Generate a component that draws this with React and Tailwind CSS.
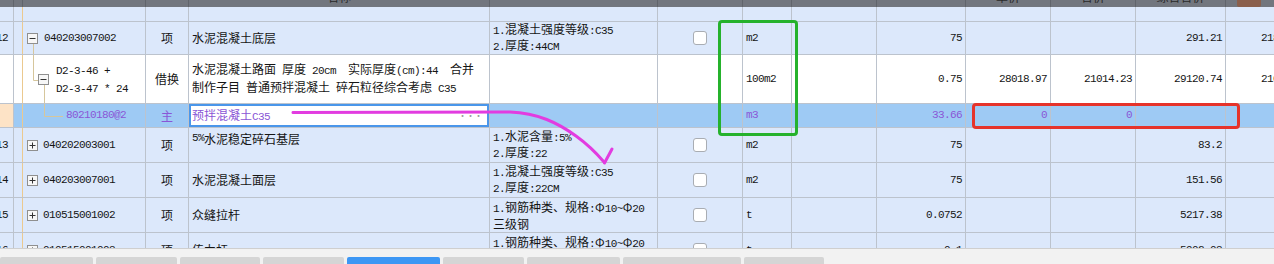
import React from "react"

const line = "border-[#bcc3cd]"

const W = [
  "w-[14px]", "w-[9px]", "w-[123px]", "w-[43px]", "w-[301px]", "w-[168px]", "w-[85px]",
  "w-[49px]", "w-[85px]", "w-[89px]", "w-[85px]", "w-[85px]", "w-[90px]", "w-[87px]",
]

// ascii runs get a mono font so digits are 6px wide like the original
function Txt({ s }) {
  return s
    .split(/([\x20-\x7e]+)/)
    .filter(Boolean)
    .map((p, i) =>
      /^[\x20-\x7e]+$/.test(p) ? (
        <span key={i} className="font-['Liberation_Mono',monospace] text-[11px] tracking-[-0.6px] whitespace-pre">
          {p}
        </span>
      ) : (
        <span key={i}>{p}</span>
      ),
    )
}

function C({ i, align = "items-center", className = "", children }) {
  return (
    <div
      className={`${W[i]} shrink-0 h-full border-r ${i === 1 ? "border-[#ebc98f]" : line} flex ${align} overflow-hidden whitespace-nowrap ${className}`}
    >
      {children}
    </div>
  )
}

function Row({ h, bg = "bg-[#dce8fb]", children }) {
  return <div className={`flex ${h} ${bg} border-b ${line}`}>{children}</div>
}

const Box = ({ plus }) => (
  <svg width="11" height="11" viewBox="0 0 11 11" className="shrink-0">
    <rect x="0.5" y="0.5" width="10" height="10" fill="#f7f7f7" stroke="#8f8f8f" />
    <path d={plus ? "M2.5 5.5h6M5.5 2.5v6" : "M2.5 5.5h6"} stroke="#333" strokeWidth="1" />
  </svg>
)

const Check = () => <div className="w-[14px] h-[14px] bg-white border border-[#a9adb3] rounded-[3px]" />

const items = [
  { no: "13", code: "040202003001", name: "5%水泥稳定碎石基层", top: true, feat: ["1.水泥含量:5%", "2.厚度:22"], unit: "m2", qty: "75", total: "83.2" },
  { no: "14", code: "040203007001", name: "水泥混凝土面层", feat: ["1.混凝土强度等级:C35", "2.厚度:22CM"], unit: "m2", qty: "75", total: "151.56" },
  { no: "15", code: "010515001002", name: "众缝拉杆", feat: ["1.钢筋种类、规格:Φ10~Φ20", "三级钢"], unit: "t", qty: "0.0752", total: "5217.38" },
  { no: "16", code: "010515001003", name: "传力杆", feat: ["1.钢筋种类、规格:Φ10~Φ20", "三级钢"], unit: "t", qty: "0.1", total: "5902.03" },
]

function ItemRow({ r }) {
  return (
    <Row h="h-[35px]">
      <C i={0} className="justify-end pr-[5px]"><Txt s={r.no} /></C>
      <C i={1} />
      <C i={2} className="pl-[4px] gap-[5px]"><Box plus /><Txt s={r.code} /></C>
      <C i={3} className="justify-center">项</C>
      <C i={4} align={r.top ? "items-start" : "items-center"} className={r.top ? "pl-[3px] pt-[2px]" : "pl-[3px]"}>
        <Txt s={r.name} />
      </C>
      <C i={5} className="pl-[3px]">
        <div className="leading-[13.5px]">
          {r.feat.map((f) => <div key={f}><Txt s={f} /></div>)}
        </div>
      </C>
      <C i={6} className="justify-center"><Check /></C>
      <C i={7} className="pl-[3px]"><Txt s={r.unit} /></C>
      <C i={8} />
      <C i={9} className="justify-end pr-[3px]"><Txt s={r.qty} /></C>
      <C i={10} />
      <C i={11} />
      <C i={12} className="justify-end pr-[3px]"><Txt s={r.total} /></C>
      <C i={13} />
    </Row>
  )
}

// only the lowest strokes of the header labels are still on screen
const heads = ["", "", "", "", "名称", "", "", "", "", "", "单价", "合价", "综合合价", ""]

const tabs = [
  ["工料机显示", "w-[93px]"],
  ["单价构成", "w-[81px]"],
  ["标准换算", "w-[80px]"],
  ["换算信息", "w-[81px]"],
  ["特征及内容", "w-[93px]"],
  ["组价方案", "w-[81px]"],
  ["工程量明细", "w-[93px]"],
  ["反查图形工程量", "w-[118px]"],
  ["说明信息", "w-[80px]"],
]

const purple = "text-[#8a56d6]"

export default function App() {
  return (
    <div className="relative w-[1274px] h-[264px] overflow-hidden bg-[#f2f2f2] font-['Noto_Sans_CJK_SC',sans-serif] text-[12px] text-[#151515]">
      <div className="h-[248px] overflow-hidden bg-[#dce8fb]">
        {/* header, mostly scrolled away */}
        <div className="flex h-[7px] bg-[#72767e]">
          {heads.map((h, i) => (
            <div key={i} className={`${W[i]} shrink-0 h-full border-r border-[#60646b] flex items-end justify-center overflow-hidden text-[#2a2a2a]`}>
              {i === 13 ? (
                <div className="w-[24px] h-[7px] ml-[-40px] bg-[#8a5f4c] rounded-b-[2px]" />
              ) : (
                <div className="leading-[12px] shrink-0 mb-[4px]">{h}</div>
              )}
            </div>
          ))}
        </div>

        {/* blank row */}
        <Row h="h-[15px]">
          {W.map((_, i) => <C key={i} i={i} />)}
        </Row>

        {/* row 12 */}
        <Row h="h-[33px]">
          <C i={0} className="justify-end pr-[5px]"><Txt s="12" /></C>
          <C i={1} />
          <C i={2} className="relative pl-[4px] gap-[6px]">
            <svg className="absolute left-0 top-0" width="123" height="33">
              <path d="M10.5 22V33" stroke="#d6c69c" />
            </svg>
            <Box />
            <Txt s="040203007002" />
          </C>
          <C i={3} className="justify-center">项</C>
          <C i={4} className="pl-[3px]">水泥混凝土底层</C>
          <C i={5} className="pl-[3px]">
            <div className="leading-[13px]">
              <div><Txt s="1.混凝土强度等级:C35" /></div>
              <div><Txt s="2.厚度:44CM" /></div>
            </div>
          </C>
          <C i={6} className="justify-center"><Check /></C>
          <C i={7} className="pl-[3px]"><Txt s="m2" /></C>
          <C i={8} />
          <C i={9} className="justify-end pr-[3px]"><Txt s="75" /></C>
          <C i={10} />
          <C i={11} />
          <C i={12} className="justify-end pr-[3px]"><Txt s="291.21" /></C>
          <C i={13} className="justify-end pr-[3px]"><Txt s="21840.75" /></C>
        </Row>

        {/* D2 row */}
        <Row h="h-[49px]" bg="bg-white">
          <C i={0} />
          <C i={1} />
          <C i={2} className="relative pl-[15px] gap-[7px]">
            <svg className="absolute left-0 top-0" width="123" height="49">
              <path d="M10.5 0V25.5H15M21.5 30V49" stroke="#d6c69c" fill="none" />
            </svg>
            <Box />
            <div className="leading-[15px]">
              <div><Txt s="D2-3-46 +" /></div>
              <div><Txt s="D2-3-47 * 24" /></div>
            </div>
          </C>
          <C i={3} className="justify-center">借换</C>
          <C i={4} className="pl-[3px]">
            <div className="leading-[15px]">
              <div><Txt s="水泥混凝土路面 厚度 20cm  实际厚度(cm):44  合并" /></div>
              <div><Txt s="制作子目 普通预拌混凝土 碎石粒径综合考虑 C35" /></div>
            </div>
          </C>
          <C i={5} />
          <C i={6} />
          <C i={7} className="pl-[3px]"><Txt s="100m2" /></C>
          <C i={8} />
          <C i={9} className="justify-end pr-[3px]"><Txt s="0.75" /></C>
          <C i={10} className="justify-end pr-[3px]"><Txt s="28018.97" /></C>
          <C i={11} className="justify-end pr-[3px]"><Txt s="21014.23" /></C>
          <C i={12} className="justify-end pr-[3px]"><Txt s="29120.74" /></C>
          <C i={13} className="justify-end pr-[3px]"><Txt s="21014.23" /></C>
        </Row>

        {/* selected row */}
        <Row h="h-[24px]" bg="bg-[#9ecaf4]">
          <C i={0} className="bg-[#fde3c6]" />
          <C i={1} />
          <C i={2} className={`relative pl-[43px] ${purple}`}>
            <svg className="absolute left-0 top-0" width="123" height="24">
              <path d="M21.5 0V12.5H40" stroke="#d6c69c" fill="none" />
            </svg>
            <Txt s="80210180@2" />
          </C>
          <C i={3} className={`justify-center ${purple}`}>主</C>
          <C i={4}>
            <div className={`w-full h-full bg-white border-2 border-[#4a96ea] flex items-center justify-between pl-[1px] pr-[5px] ${purple}`}>
              <span><Txt s="预拌混凝土C35" /></span>
              <span className="text-[#9a9a9a] text-[9px] tracking-[-1px]">···</span>
            </div>
          </C>
          <C i={5} />
          <C i={6} />
          <C i={7} className={`pl-[3px] ${purple}`}><Txt s="m3" /></C>
          <C i={8} />
          <C i={9} className={`justify-end pr-[3px] ${purple}`}><Txt s="33.66" /></C>
          <C i={10} className={`justify-end pr-[3px] ${purple}`}><Txt s="0" /></C>
          <C i={11} className={`justify-end pr-[3px] ${purple}`}><Txt s="0" /></C>
          <C i={12} />
          <C i={13} />
        </Row>

        {items.map((r) => <ItemRow key={r.no} r={r} />)}
      </div>

      {/* bottom tabs */}
      <div className="border-t border-[#cfcfcf] pt-[8px] flex gap-[3px]">
        {tabs.map(([t, w], i) => (
          <div
            key={t}
            className={`${w} h-[22px] shrink-0 rounded-t-[2px] pt-[6px] text-center leading-[14px] ${i === 4 ? "bg-[#3d97f4] text-white" : "bg-[#d5d5d5] text-[#333]"}`}
          >
            {t}
          </div>
        ))}
      </div>

      {/* annotations drawn over the grid */}
      <div className="absolute left-[718px] top-[20px] w-[80px] h-[116px] border-[3px] border-[#25b22c] rounded-[4px]" />
      <div className="absolute left-[972px] top-[103px] w-[268px] h-[26px] border-[3px] border-[#e6332a] rounded-[4px]" />
      <svg className="absolute left-0 top-0 pointer-events-none" width="1274" height="264">
        <path
          d="M293 112.5 L510 112 C538 113 558 123 576 136 C590 146 598 155 604 162"
          stroke="#e23ce0"
          strokeWidth="3"
          fill="none"
          strokeLinecap="round"
        />
        <path d="M612 149 L604.5 163" stroke="#e23ce0" strokeWidth="3" strokeLinecap="round" />
      </svg>
    </div>
  )
}
